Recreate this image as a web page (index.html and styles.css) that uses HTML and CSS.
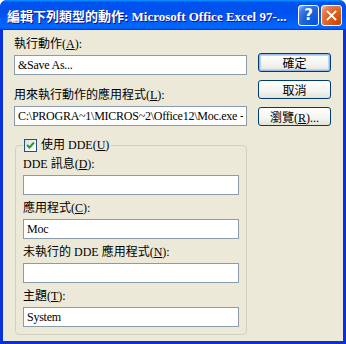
FILE: index.html
```html
<!DOCTYPE html>
<html lang="zh-Hant">
<head>
    <meta charset="UTF-8">
    <title>編輯下列類型的動作</title>
    <link rel="stylesheet" href="styles.css">
</head>
<body>
    <div class="window">
        <div class="title-bar">
            <span class="title-text">編輯下列類型的動作: Microsoft Office Excel 97-...</span>
            <div class="title-controls">
                <button class="ctl ctl-help">?</button>
                <button class="ctl ctl-close">
                    <svg width="11" height="11" viewBox="0 0 11 11">
                        <path d="M1.5 1.5 L9.5 9.5 M9.5 1.5 L1.5 9.5" stroke="#fff" stroke-width="1.8" stroke-linecap="square"/>
                    </svg>
                </button>
            </div>
        </div>
        <div class="client">
            <div class="main-col">
                <div class="field-label">執行動作(<u>A</u>):</div>
                <input class="text-input" type="text" value="&amp;Save As...">
                <div class="field-label second">用來執行動作的應用程式(<u>L</u>):</div>
                <input class="text-input" type="text" value="C:\PROGRA~1\MICROS~2\Office12\Moc.exe -:">

                <fieldset class="group">
                    <legend class="group-legend">
                        <span class="check">
                            <svg width="11" height="11" viewBox="0 0 11 11">
                                <path d="M2 5 L4.5 7.5 L9 2.5" fill="none" stroke="#21a121" stroke-width="2"/>
                            </svg>
                        </span>使用 DDE(<u>U</u>)
                    </legend>
                    <div class="field-label first">DDE 訊息(<u>D</u>):</div>
                    <input class="text-input" type="text" value="">
                    <div class="field-label">應用程式(<u>C</u>):</div>
                    <input class="text-input" type="text" value="Moc">
                    <div class="field-label">未執行的 DDE 應用程式(<u>N</u>):</div>
                    <input class="text-input" type="text" value="">
                    <div class="field-label">主題(<u>T</u>):</div>
                    <input class="text-input" type="text" value="System">
                </fieldset>
            </div>
            <div class="button-col">
                <button class="push default">確定</button>
                <button class="push">取消</button>
                <button class="push">瀏覽(<u>R</u>)...</button>
            </div>
        </div>
    </div>
</body>
</html>
```

FILE: styles.css
```css
body {
    margin: 0;
    background-color: #ffffff;
    font-family: "Liberation Serif", "Noto Sans CJK TC", serif;
    font-size: 12px;
    color: #000;
}

.window {
    width: 346px;
    height: 344px;
    display: flex;
    flex-direction: column;
    background-color: #0831d9;
    border-radius: 7px 7px 0 0;
    overflow: hidden;
    box-sizing: border-box;
}

.title-bar {
    height: 30px;
    flex-shrink: 0;
    display: flex;
    align-items: center;
    justify-content: space-between;
    padding: 0 4px 0 7px;
    background: linear-gradient(to bottom, #0997ff 0, #0053ee 8%, #0050ee 40%, #0066ff 88%, #0066ff 93%, #005bff 95%, #003dd7 96%, #003dd7 100%);
}

.title-text {
    color: #fff;
    font-weight: bold;
    font-size: 13px;
    white-space: nowrap;
    text-shadow: 1px 1px #0f1089;
    margin-top: 1px;
}

.title-controls {
    display: flex;
    gap: 2px;
    margin-top: 1px;
}

.ctl {
    width: 21px;
    height: 21px;
    padding: 0;
    border: 1px solid #fff;
    border-radius: 3px;
    display: flex;
    align-items: center;
    justify-content: center;
    color: #fff;
}

.ctl-help {
    background: radial-gradient(circle at 90% 90%, #0054e9 0%, #2263d5 55%, #4480f4 80%, #a9c6f8 100%);
    font-family: "DejaVu Sans", sans-serif;
    font-weight: bold;
    font-size: 15px;
    line-height: 1;
}

.ctl-close {
    background: radial-gradient(circle at 90% 90%, #cc4600 0%, #dc6527 55%, #e5805d 80%, #f7c8a8 100%);
}

.client {
    flex: 1;
    margin: 0 3px 3px;
    background-color: #ece9d8;
    display: flex;
    gap: 11px;
    padding: 7px 0 0 11px;
}

.main-col {
    width: 233px;
    display: flex;
    flex-direction: column;
}

.field-label {
    height: 14px;
    line-height: 14px;
    margin-bottom: 4px;
    white-space: nowrap;
}

.field-label.second {
    margin-top: 13px;
}

.text-input {
    height: 20px;
    box-sizing: border-box;
    border: 1px solid #8c9bab;
    padding: 0 3px;
    font-family: "Liberation Serif", "Noto Sans CJK TC", serif;
    font-size: 12px;
    letter-spacing: -0.25px;
    background: #fff;
    outline: none;
    width: 100%;
    margin: 0;
}

.group {
    margin: 12px 0 0 1px;
    padding: 0 7px 0 7px;
    border: 1px solid #d0d0bf;
    border-radius: 4px;
    height: 197px;
    box-sizing: border-box;
    min-width: 0;
}

.group .field-label {
    margin-top: 6px;
}

.group .field-label.first {
    margin-top: 5px;
}

.group-legend {
    padding: 0 2px 0 1px;
    display: flex;
    align-items: center;
    height: 14px;
    line-height: 14px;
}

.check {
    width: 11px;
    height: 11px;
    border: 1px solid #1c5180;
    background: linear-gradient(135deg, #dcdcd7 0%, #f8f8f4 70%, #fff 100%);
    display: inline-flex;
    margin-right: 4px;
}

.button-col {
    display: flex;
    flex-direction: column;
    gap: 8px;
    padding-top: 16px;
}

.push {
    width: 73px;
    height: 19px;
    padding: 0;
    border: 1px solid #003c74;
    border-radius: 3px;
    background: linear-gradient(to bottom, #fff 0%, #f4f4f0 60%, #e3e3db 100%);
    font-family: "Liberation Serif", "Noto Sans CJK TC", serif;
    font-size: 12px;
    color: #000;
}

.push.default {
    box-shadow: inset 0 0 0 1px #98b8ea, inset 0 0 0 2px #bcd4f6;
}
```
